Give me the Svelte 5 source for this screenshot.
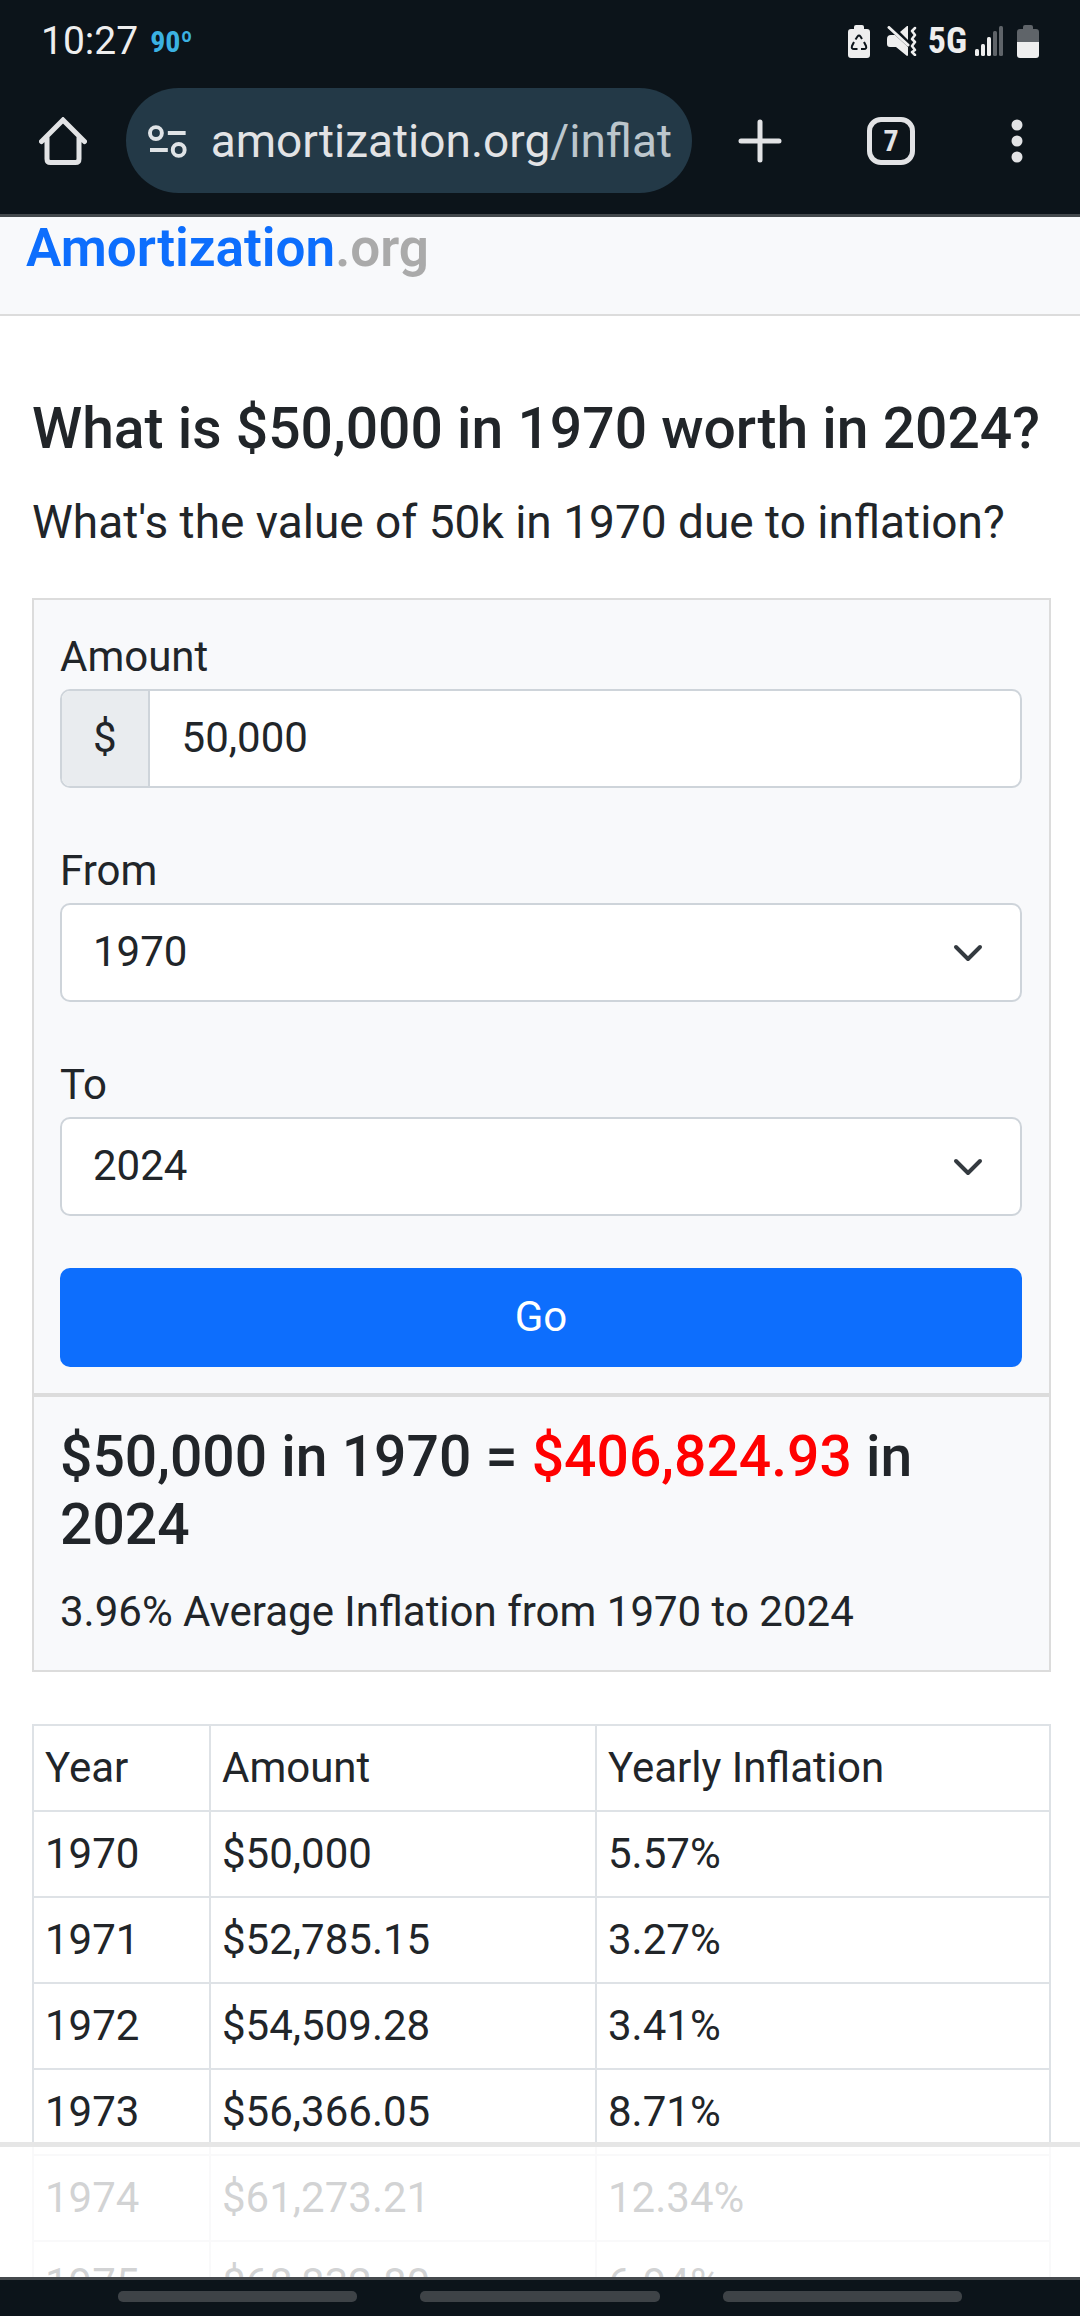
<script lang="ts">
  type Row = { year: number; amount: string; inflation: string };

  const rows: Row[] = [
    { year: 1970, amount: '$50,000', inflation: '5.57%' },
    { year: 1971, amount: '$52,785.15', inflation: '3.27%' },
    { year: 1972, amount: '$54,509.28', inflation: '3.41%' },
    { year: 1973, amount: '$56,366.05', inflation: '8.71%' },
    { year: 1974, amount: '$61,273.21', inflation: '12.34%' },
    { year: 1975, amount: '$68,832.80', inflation: '6.94%' }
  ];
  const years = Array.from({ length: 55 }, (_, i) => 1970 + i);

  let amount = $state('50,000');
  let from = $state(1970);
  let to = $state(2024);
</script>

{#snippet chevron()}
  <svg class="chevron" viewBox="0 0 16 16" aria-hidden="true">
    <path d="m2 5 6 6 6-6" fill="none" stroke="#343a40" stroke-width="2" stroke-linecap="round" stroke-linejoin="round" />
  </svg>
{/snippet}

<div class="screen">
  <div class="status">
    <span class="clock">10:27</span>
    <span class="temp">90º</span>
    <div class="status-icons">
      <svg width="22" height="33" viewBox="0 0 22 33" aria-hidden="true">
        <path d="M6 2q0-2 2-2h6q2 0 2 2v2h3q3 0 3 3v23q0 3-3 3H3q-3 0-3-3V7q0-3 3-3h3z" fill="#eee" />
        <g fill="none" stroke="#0c141a" stroke-width="2">
          <path d="M7.5 14.5 9.5 11.500q1.5-2 3 0l1.5 2.5" />
          <path d="M16 17l2 4q1 3-2 3h-3" />
          <path d="M9.5 24H6q-3 0-2-3l2-4" />
        </g>
      </svg>
      <svg class="mute" width="30" height="30" viewBox="0 0 30 30" aria-hidden="true">
        <path d="M0 13q0-4 4-4h4l13 12v8q0 1-1 1L9 21H3q-3 0-3-3z" fill="#eee" />
        <path d="M13 6l7-6h1v14z" fill="#eee" />
        <path d="M2 1.5 21 19" stroke="#eee" stroke-width="3" stroke-linecap="round" />
        <path d="M28 2l-3 3 3 4-3 4 3 3-3 4 3 4-3 2 3 3" fill="none" stroke="#eee" stroke-width="2.5" stroke-linecap="round" stroke-linejoin="round" />
      </svg>
      <span class="network">5G</span>
      <svg class="signal" width="28" height="30" viewBox="0 0 28 30" aria-hidden="true">
        <g fill="#eee">
          <rect x="0" y="23" width="4" height="7" rx="1.5" />
          <rect x="6" y="18" width="4" height="12" rx="1.5" />
          <rect x="12" y="11" width="4" height="19" rx="1.5" />
        </g>
        <g fill="#5f6469">
          <rect x="18" y="5" width="4" height="25" rx="1.5" />
          <rect x="24" y="0" width="4" height="30" rx="1.5" />
        </g>
      </svg>
      <svg width="22" height="33" viewBox="0 0 22 33" aria-hidden="true">
        <path d="M6 2q0-2 2-2h6q2 0 2 2v2h3q3 0 3 3v10H0V7q0-3 3-3h3z" fill="#5f6469" />
        <path d="M0 17h22v13q0 3-3 3H3q-3 0-3-3z" fill="#eee" />
      </svg>
    </div>
  </div>

  <div class="toolbar">
    <button aria-label="Home">
      <svg width="48" height="48" viewBox="0 0 48 48" aria-hidden="true">
        <path d="M2.5 24.5 24 3l21.5 21.5M8 20v22q0 3.5 3.5 3.5h25Q40 45.5 40 42V20" fill="none" stroke="#e2e3e5" stroke-width="5" stroke-linecap="round" />
      </svg>
    </button>
    <button class="address" aria-label="Edit address">
      <svg width="40" height="34" viewBox="0 0 40 34" fill="none" stroke="#dfe3e6" stroke-width="4" aria-hidden="true">
        <circle cx="8" cy="8" r="6" />
        <path d="M20 8h18M2 25h18" />
        <circle cx="31" cy="25" r="6" />
      </svg>
      <span class="url">amortization.org<span class="path">/inflat</span></span>
    </button>
    <button aria-label="New tab">
      <svg width="44" height="44" viewBox="0 0 44 44" aria-hidden="true">
        <path d="M22 3v38M3 22h38" stroke="#e2e3e5" stroke-width="5" stroke-linecap="round" />
      </svg>
    </button>
    <button aria-label="Open tabs"><span class="tab-count">7</span></button>
    <button aria-label="Menu">
      <svg width="12" height="44" viewBox="0 0 12 44" fill="#e2e3e5" aria-hidden="true">
        <circle cx="6" cy="6" r="5.5" />
        <circle cx="6" cy="22" r="5.5" />
        <circle cx="6" cy="38" r="5.5" />
      </svg>
    </button>
  </div>

  <div class="viewport">
    <header>
      <a class="brand" href="/">Amortization<span>.org</span></a>
    </header>

    <main>
      <h1>What is $50,000 in 1970 worth in 2024?</h1>
      <h2>What's the value of 50k in 1970 due to inflation?</h2>

      <section class="card">
        <form onsubmit={(e) => e.preventDefault()}>
          <div class="field">
            <label for="amount">Amount</label>
            <div class="input-group">
              <span class="addon">$</span>
              <input id="amount" type="text" inputmode="decimal" bind:value={amount} />
            </div>
          </div>
          <div class="field">
            <label for="from">From</label>
            <div class="select-wrap">
              <select id="from" bind:value={from}>
                {#each years as y}
                  <option value={y}>{y}</option>
                {/each}
              </select>
              {@render chevron()}
            </div>
          </div>
          <div class="field">
            <label for="to">To</label>
            <div class="select-wrap">
              <select id="to" bind:value={to}>
                {#each years as y}
                  <option value={y}>{y}</option>
                {/each}
              </select>
              {@render chevron()}
            </div>
          </div>
          <button class="go" type="submit">Go</button>
        </form>
        <div class="result">
          <p class="headline">$50,000 in 1970 = <span>$406,824.93</span> in 2024</p>
          <p>3.96% Average Inflation from 1970 to 2024</p>
        </div>
      </section>

      <table>
        <thead>
          <tr>
            <th class="col-year" scope="col">Year</th>
            <th class="col-amount" scope="col">Amount</th>
            <th scope="col">Yearly Inflation</th>
          </tr>
        </thead>
        <tbody>
          {#each rows as row}
            <tr>
              <td>{row.year}</td>
              <td>{row.amount}</td>
              <td>{row.inflation}</td>
            </tr>
          {/each}
        </tbody>
      </table>
    </main>

    <div class="anchor-ad"></div>
  </div>

  <div class="nav-hints">
    <span></span>
    <span></span>
    <span></span>
  </div>
</div>

<style>
  :global(body) {
    background: #fff;
  }
  .screen {
    height: 100vh;
    display: flex;
    flex-direction: column;
    overflow: hidden;
    font-family: Roboto, 'Liberation Sans', sans-serif;
    font-size: 42px;
    line-height: 63px;
    color: #212529;
  }
  .screen * {
    box-sizing: border-box;
  }
  h1,
  h2,
  p {
    margin: 0;
  }
  button,
  input,
  select {
    font: inherit;
    color: inherit;
    margin: 0;
  }

  /* phone status bar */
  .status {
    flex: none;
    height: 82px;
    padding: 0 41px;
    display: flex;
    align-items: center;
    background: #0c141a;
    color: #eee;
  }
  .clock {
    font-size: 39px;
  }
  .temp,
  .network,
  .tab-count {
    font-family: 'Roboto Condensed', Roboto, sans-serif;
    font-weight: 700;
  }
  .temp {
    margin-left: 12px;
    font-size: 30px;
    color: #3bb2e2;
  }
  .status-icons {
    margin-left: auto;
    display: flex;
    align-items: center;
  }
  .mute {
    margin-left: 17px;
  }
  .network {
    margin: 0 8px 0 11px;
    font-size: 36px;
  }
  .signal {
    margin-right: 14px;
  }

  /* browser toolbar */
  .toolbar {
    flex: none;
    display: grid;
    grid-template-columns: 126px 1fr 136px 126px 126px;
    padding: 6px 0 21px;
    background: #0c141a;
    border-bottom: 3px solid #43484c;
  }
  .toolbar button {
    display: flex;
    align-items: center;
    justify-content: center;
    height: 105px;
    padding: 0;
    border: 0;
    background: none;
    color: #e2e3e5;
  }
  .toolbar .address {
    justify-content: flex-start;
    gap: 23px;
    min-width: 0;
    padding: 2px 20px 0 22px;
    border-radius: 53px;
    background: #233947;
    overflow: hidden;
  }
  .url {
    font-size: 46px;
    white-space: nowrap;
  }
  .path {
    color: #bcc6cc;
  }
  .tab-count {
    width: 48px;
    height: 48px;
    border: 5px solid #e2e3e5;
    border-radius: 14px;
    font-size: 30px;
    line-height: 38px;
  }

  /* page */
  .viewport {
    flex: 1;
    min-height: 0;
    position: relative;
    overflow: hidden;
    background: #fff;
  }
  header {
    padding: 0 26px 34px;
    background: #f8f9fb;
    border-bottom: 2px solid #dcdcdc;
  }
  .brand {
    display: block;
    font-size: 53px;
    font-weight: 600;
    line-height: 63px;
    color: #0d6efd;
    text-decoration: none;
  }
  .brand span {
    color: #aaa;
  }
  main {
    padding: 79px 29px 0 32px;
  }
  h1,
  .headline {
    font-size: 57px;
    font-weight: 500;
    line-height: 68px;
  }
  h2 {
    margin: 31px 0 48px;
    font-size: 46px;
    font-weight: 400;
    line-height: 56px;
  }

  .card {
    background: #f8f9fb;
    border: 2px solid #dcdcdc;
  }
  form {
    padding: 26px 27px 26px 26px;
    border-bottom: 4px solid #dcdcdc;
  }
  .field {
    margin-bottom: 52px;
  }
  label {
    display: block;
    padding-bottom: 2px;
    line-height: 61px;
  }
  .input-group {
    display: flex;
    height: 99px;
    border: 2px solid #ced4da;
    border-radius: 10px;
    background: #fff;
    overflow: hidden;
  }
  .addon {
    display: flex;
    align-items: center;
    padding: 0 31px 2px;
    background: #e9ecef;
    border-right: 2px solid #ced4da;
  }
  input {
    flex: 1;
    min-width: 0;
    padding: 0 32px 2px;
    border: 0;
    outline: 0;
    background: none;
  }
  .select-wrap {
    position: relative;
  }
  select {
    display: block;
    width: 100%;
    height: 99px;
    padding: 0 31px 2px;
    appearance: none;
    border: 2px solid #ced4da;
    border-radius: 10px;
    background: #fff;
  }
  .chevron {
    position: absolute;
    top: 0;
    bottom: 0;
    right: 38px;
    width: 32px;
    height: 32px;
    margin: auto 0;
    pointer-events: none;
  }
  .go {
    display: block;
    width: 100%;
    height: 99px;
    padding: 0 31px 2px;
    border: 0;
    border-radius: 10px;
    background: #0d6efd;
    color: #fff;
  }
  .result {
    padding: 26px 26px 27px;
  }
  .headline {
    margin-bottom: 21px;
  }
  .headline span {
    color: #f00;
  }

  table {
    width: 100%;
    margin-top: 52px;
    border-collapse: collapse;
    table-layout: fixed;
  }
  th,
  td {
    padding: 11px;
    border: 2px solid #dee2e6;
    line-height: 62px;
    font-weight: 400;
    text-align: left;
  }
  .col-year {
    width: 177px;
  }
  .col-amount {
    width: 386px;
  }

  /* empty anchored ad that fades the rows below it */
  .anchor-ad {
    position: absolute;
    left: 0;
    right: 0;
    bottom: 0;
    height: 135px;
    border-top: 5px solid #e6e6e6;
    background: rgba(255, 255, 255, 0.8);
  }

  /* gesture hints */
  .nav-hints {
    flex: none;
    height: 39px;
    padding: 11px 118px 0;
    display: grid;
    grid-template-columns: repeat(3, 1fr);
    gap: 63px;
    background: #0c141a;
    border-top: 3px solid #45494d;
  }
  .nav-hints span {
    height: 11px;
    border-radius: 5px;
    background: #3e4347;
  }
</style>
